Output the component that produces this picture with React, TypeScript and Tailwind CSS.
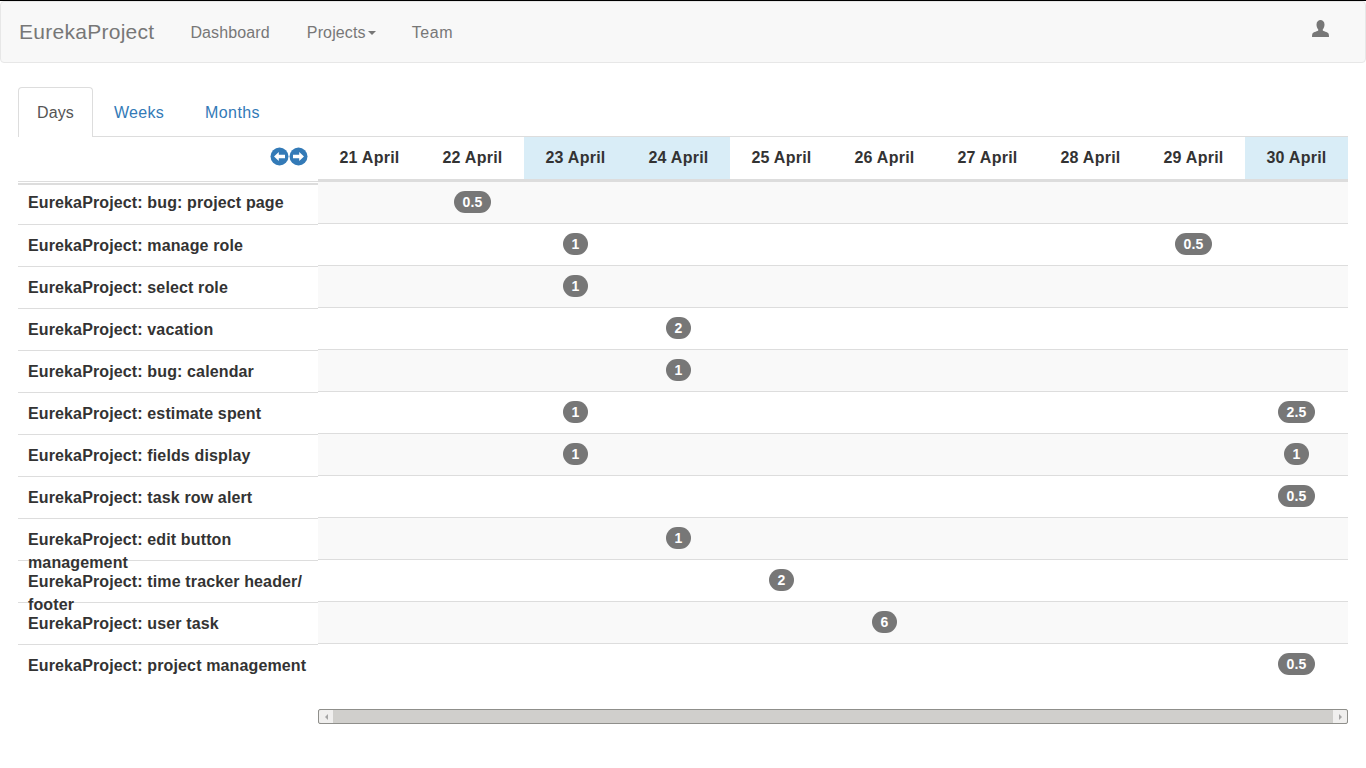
import React from 'react';

const DAYS = [
  { label: '21 April' },
  { label: '22 April' },
  { label: '23 April', off: true },
  { label: '24 April', off: true },
  { label: '25 April' },
  { label: '26 April' },
  { label: '27 April' },
  { label: '28 April' },
  { label: '29 April' },
  { label: '30 April', off: true },
];

// cells: day index -> hours
const ROWS: { name: string; cells: Record<number, string> }[] = [
  { name: 'EurekaProject: bug: project page', cells: { 1: '0.5' } },
  { name: 'EurekaProject: manage role', cells: { 2: '1', 8: '0.5' } },
  { name: 'EurekaProject: select role', cells: { 2: '1' } },
  { name: 'EurekaProject: vacation', cells: { 3: '2' } },
  { name: 'EurekaProject: bug: calendar', cells: { 3: '1' } },
  { name: 'EurekaProject: estimate spent', cells: { 2: '1', 9: '2.5' } },
  { name: 'EurekaProject: fields display', cells: { 2: '1', 9: '1' } },
  { name: 'EurekaProject: task row alert', cells: { 9: '0.5' } },
  { name: 'EurekaProject: edit button management', cells: { 3: '1' } },
  { name: 'EurekaProject: time tracker header/ footer', cells: { 4: '2' } },
  { name: 'EurekaProject: user task', cells: { 5: '6' } },
  { name: 'EurekaProject: project management', cells: { 9: '0.5' } },
];

const ArrowCircle: React.FC<{ dir: 'left' | 'right' }> = ({ dir }) => (
  <svg width="19" height="19" viewBox="0 0 19 19" className="block">
    <circle cx="9.5" cy="9.500" r="9" fill="#337ab7" />
    <path
      d={dir === 'left' ? 'M4 9.500 8.800 5V7.800H15V11.200H8.800V14Z' : 'M15 9.500 10.200 5V7.800H4V11.200H10.200V14Z'}
      fill="#fff"
    />
  </svg>
);

const UserIcon = () => (
  <svg width="18" height="18" viewBox="0 0 18 18" className="block">
    <path
      d="M4.500 4.500C4.500 1.500 6.500 0 8.500 0s4 1.500 4 4.500c0 2-.7 3.800-1.700 4.800v1.200c0 .7 5 1.500 5.700 3 .4.900.5 2 .5 3.500H0c0-1.500.1-2.600.5-3.500.7-1.500 5.700-2.300 5.700-3V9.300c-1-1-1.700-2.800-1.700-4.800Z"
      fill="#777"
    />
  </svg>
);

const App: React.FC = () => {
  return (
    <div
      className="h-[768px] overflow-hidden bg-white text-[16px] tracking-[0.13px] text-[#333]"
      style={{ fontFamily: '"Liberation Sans", Arial, sans-serif' }}
    >
      <div className="h-px bg-black"></div>
      <nav className="flex h-[62px] items-center rounded-[4px] border border-[#e7e7e7] bg-[#f8f8f8] pl-[18px] pr-[35px] text-[#777]">
        <span className="text-[21px] tracking-[0.27px]">EurekaProject</span>
        <span className="ml-9 mt-px">Dashboard</span>
        <span className="ml-[37px] mt-px flex items-center">
          Projects
          <span className="ml-[2px] mt-[1px] h-0 w-0 border-x-[4px] border-t-[4px] border-x-transparent border-t-[#777]"></span>
        </span>
        <span className="ml-9 mt-px tracking-[0.6px]">Team</span>
        <span className="ml-auto -mt-[6px]">
          <UserIcon />
        </span>
      </nav>

      <div className="mx-[18px] mt-6">
        <div className="relative z-10 flex h-[50px] items-stretch">
          <div className="mr-[2px] flex items-center rounded-t-[4px] border border-b-0 border-[#ddd] bg-white px-[18px] text-[#555]">
            Days
          </div>
          <div className="mr-[3px] flex items-center border border-b-0 border-transparent px-[18px] tracking-[0.3px] text-[#337ab7]">
            Weeks
          </div>
          <div className="flex items-center border border-b-0 border-transparent px-[18px] tracking-[0.4px] text-[#337ab7]">
            Months
          </div>
        </div>

        <div className="-mt-px flex">
          {/* task names column */}
          <div className="w-[300px] shrink-0 font-bold">
            <div className="flex h-[45px] items-start justify-end border-t border-[#ddd] pr-[10px] pt-[10px]">
              <ArrowCircle dir="left" />
              <ArrowCircle dir="right" />
            </div>
            <div className="h-px bg-[#ddd]"></div>
            <div className="mt-px h-[2px] bg-[#ddd]"></div>
            {ROWS.map((row, i) => (
              <div
                key={i}
                className={
                  i === 0
                    ? 'h-[39px] px-[10px] pt-[6px] leading-[23px]'
                    : 'h-[42px] border-t border-[#ddd] px-[10px] pt-[9px] leading-[23px]'
                }
              >
                {row.name}
              </div>
            ))}
          </div>

          {/* days grid */}
          <div className="w-[1030px] shrink-0">
            <div className="flex h-[46px] border-t border-b-[3px] border-[#ddd]">
              {DAYS.map((d) => (
                <div
                  key={d.label}
                  className={`flex w-[103px] items-center justify-center font-bold tracking-[0.25px] ${d.off ? 'bg-[#d9edf7]' : ''}`}
                >
                  {d.label}
                </div>
              ))}
            </div>
            {ROWS.map((row, i) => (
              <div
                key={i}
                className={`flex ${i > 0 ? 'h-[42px] border-t border-[#ddd]' : 'h-[41px]'} ${i % 2 === 0 ? 'bg-[#f9f9f9]' : ''}`}
              >
                {DAYS.map((d, j) => (
                  <div key={d.label} className="flex w-[103px] items-center justify-center">
                    {row.cells[j] && (
                      <span className="mb-[2px] rounded-[11px] bg-[#777] px-[9px] py-[3px] text-[14px] font-bold leading-[16px] text-white">
                        {row.cells[j]}
                      </span>
                    )}
                  </div>
                ))}
              </div>
            ))}
            {/* horizontal scrollbar */}
            <div className="mt-[24px] flex h-[15px] rounded-[2px] border border-[#8f8f8b] bg-[#d0cfcc]">
              <div className="flex w-[14px] items-center justify-center rounded-l-[2px] bg-[#f0efee]">
                <span className="h-0 w-0 border-y-[3px] border-r-[3px] border-y-transparent border-r-[#a5a5a5]"></span>
              </div>
              <div className="flex-1"></div>
              <div className="flex w-[14px] items-center justify-center rounded-r-[2px] bg-[#f0efee]">
                <span className="h-0 w-0 border-y-[3px] border-l-[3px] border-y-transparent border-l-[#a5a5a5]"></span>
              </div>
            </div>
          </div>
        </div>
      </div>
    </div>
  );
};

export default App;
